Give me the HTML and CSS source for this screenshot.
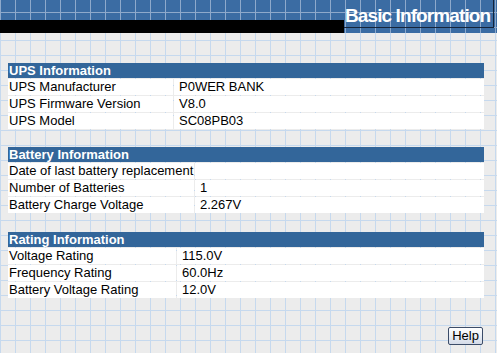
FILE: index.html
```html
<!DOCTYPE html>
<html>
<head>
<meta charset="utf-8">
<link rel="stylesheet" href="styles.css">
</head>
<body>
<div class="top">
  <div class="top-left"><div class="black"></div></div>
  <div class="title">Basic Information</div>
</div>
<div class="content">
  <div class="section ups">
    <div class="head">UPS Information</div>
    <div class="cell label">UPS Manufacturer</div><div class="cell value">P0WER BANK</div>
    <div class="cell label">UPS Firmware Version</div><div class="cell value">V8.0</div>
    <div class="cell label">UPS Model</div><div class="cell value">SC08PB03</div>
  </div>
  <div class="section battery">
    <div class="head">Battery Information</div>
    <div class="cell label">Date of last battery replacement</div><div class="cell value"></div>
    <div class="cell label">Number of Batteries</div><div class="cell value">1</div>
    <div class="cell label">Battery Charge Voltage</div><div class="cell value">2.267V</div>
  </div>
  <div class="section rating">
    <div class="head">Rating Information</div>
    <div class="cell label">Voltage Rating</div><div class="cell value">115.0V</div>
    <div class="cell label">Frequency Rating</div><div class="cell value">60.0Hz</div>
    <div class="cell label">Battery Voltage Rating</div><div class="cell value">12.0V</div>
  </div>
  <div class="actions"><button class="help">Help</button></div>
</div>
</body>
</html>
```

FILE: styles.css
```css
html, body {
  margin: 0;
  padding: 0;
  min-height: 100%;
}
body {
  width: 497px;
  height: 353px;
  overflow: hidden;
  font-family: "Liberation Sans", Arial, sans-serif;
  font-size: 13px;
  color: #000;
  background-color: #ececec;
  background-image:
    linear-gradient(to right, #c6d9ee 1px, transparent 1px),
    linear-gradient(to bottom, #c6d9ee 1px, transparent 1px);
  background-size: 15px 15px;
  background-position: 0 10px;
}
.top {
  height: 33px;
  display: flex;
  background-color: #3b6ca3;
  background-image:
    linear-gradient(to right, #8ea9cb 1px, transparent 1px),
    linear-gradient(to bottom, #8ea9cb 1px, transparent 1px);
  background-size: 15px 15px;
  background-position: 0 12px;
}
.top-left {
  flex: 1;
  display: flex;
  flex-direction: column;
  justify-content: flex-end;
}
.black {
  height: 13px;
  background: #000;
}
.title {
  width: 148px;
  height: 22px;
  padding-top: 5px;
  margin-right: 3px;
  border-bottom: 1px solid #15243a;
  border-right: 1px solid #15243a;
  color: #fff;
  font-weight: bold;
  font-size: 19px;
  line-height: 22px;
  letter-spacing: -0.9px;
  white-space: nowrap;
  padding-left: 1px;
}
.content {
  width: 476px;
  padding: 30px 0 0 8px;
}
.section {
  display: grid;
  gap: 1px;
  margin-bottom: 18px;
}
.ups { grid-template-columns: 165px 1fr; }
.battery { grid-template-columns: 186px 1fr; }
.rating { grid-template-columns: 168px 1fr; margin-bottom: 0; }
.battery { margin-bottom: 19px; }
.head {
  grid-column: 1 / -1;
  height: 15px;
  line-height: 15px;
  background: #33669a;
  color: #fff;
  font-weight: bold;
  padding-left: 1px;
}
.cell {
  height: 16px;
  line-height: 16px;
  background: #fff;
  white-space: nowrap;
}
.label { padding-left: 1px; }
.value { padding-left: 5px; }
.actions {
  display: flex;
  justify-content: flex-end;
  margin-top: 29px;
  padding-right: 1px;
}
.help {
  width: 35px;
  height: 18px;
  padding: 0;
  font-family: "Liberation Sans", Arial, sans-serif;
  font-size: 13px;
  color: #000;
  border: 1px solid #3c4c68;
  border-radius: 2px;
  background: linear-gradient(to bottom, #ffffff, #e6eaf2 60%, #d4dbe8);
  line-height: 16px;
}
```
